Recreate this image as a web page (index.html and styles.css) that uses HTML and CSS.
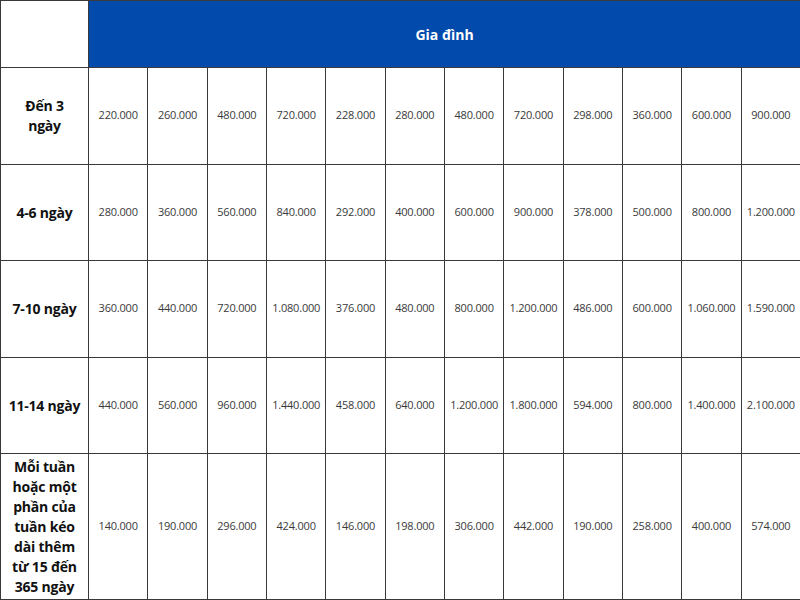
FILE: index.html
```html
<!DOCTYPE html>
<html lang="vi">
<head>
<meta charset="utf-8">
<title>Bảng giá</title>
<link rel="stylesheet" href="styles.css">
</head>
<body>
<table class="price-table">
  <colgroup>
    <col class="col-label">
    <col span="12" class="col-num">
  </colgroup>
  <tr class="row-head">
    <th class="corner"></th>
    <th class="head" colspan="12">Gia đình</th>
  </tr>
  <tr class="row-a">
    <th class="label">Đến 3<br>ngày</th>
    <td>220.000</td><td>260.000</td><td>480.000</td><td>720.000</td><td>228.000</td><td>280.000</td><td>480.000</td><td>720.000</td><td>298.000</td><td>360.000</td><td>600.000</td><td>900.000</td>
  </tr>
  <tr class="row-b">
    <th class="label">4-6 ngày</th>
    <td>280.000</td><td>360.000</td><td>560.000</td><td>840.000</td><td>292.000</td><td>400.000</td><td>600.000</td><td>900.000</td><td>378.000</td><td>500.000</td><td>800.000</td><td>1.200.000</td>
  </tr>
  <tr class="row-a">
    <th class="label">7-10 ngày</th>
    <td>360.000</td><td>440.000</td><td>720.000</td><td>1.080.000</td><td>376.000</td><td>480.000</td><td>800.000</td><td>1.200.000</td><td>486.000</td><td>600.000</td><td>1.060.000</td><td>1.590.000</td>
  </tr>
  <tr class="row-b">
    <th class="label">11-14 ngày</th>
    <td>440.000</td><td>560.000</td><td>960.000</td><td>1.440.000</td><td>458.000</td><td>640.000</td><td>1.200.000</td><td>1.800.000</td><td>594.000</td><td>800.000</td><td>1.400.000</td><td>2.100.000</td>
  </tr>
  <tr class="row-last">
    <th class="label">Mỗi tuần<br>hoặc một<br>phần của<br>tuần kéo<br>dài thêm<br>từ 15 đến<br>365 ngày</th>
    <td>140.000</td><td>190.000</td><td>296.000</td><td>424.000</td><td>146.000</td><td>198.000</td><td>306.000</td><td>442.000</td><td>190.000</td><td>258.000</td><td>400.000</td><td>574.000</td>
  </tr>
</table>
</body>
</html>
```
FILE: styles.css
```css
html, body {
  margin: 0;
  padding: 0;
  background: #ffffff;
}
.price-table {
  border-collapse: collapse;
  table-layout: fixed;
  width: 800px;
  font-family: "Open Sans", "Liberation Sans", sans-serif;
  color: #222;
}
.col-label { width: 88px; }
.col-num { width: 59.33px; }
.price-table th,
.price-table td {
  border: 1px solid #3a3a3a;
  padding: 0 1px;
  text-align: center;
  vertical-align: middle;
}
.price-table td {
  font-size: 11px;
  font-weight: 400;
  color: #3a3a3a;
  letter-spacing: -0.2px;
  white-space: nowrap;
  padding-bottom: 3px;
}
.row-head { height: 67px; }
.row-a { height: 97px; }
.row-b { height: 96px; }
.row-last { height: 146px; }
.corner { background: #fff; border-color: #bbb; }
.head {
  background: #034aad;
  color: #fff;
  font-size: 14px;
  font-weight: 700;
  border-color: #034aad;
  padding-bottom: 6px;
}
.label {
  font-size: 14px;
  font-weight: 700;
  line-height: 20px;
  color: #111;
  padding: 0 4px 2px;
  white-space: nowrap;
  letter-spacing: -0.2px;
}
```
